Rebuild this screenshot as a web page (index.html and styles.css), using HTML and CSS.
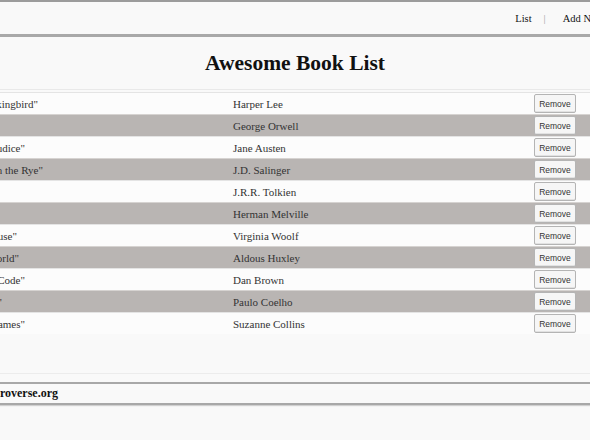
FILE: index.html
```html
<!DOCTYPE html>
<html lang="en">
<head>
<meta charset="utf-8">
<title>Awesome Book List</title>
<link rel="stylesheet" href="styles.css">
</head>
<body>
<div class="page">
  <header class="site-header">
    <nav class="nav">
      <a href="#" class="nav-link">List</a>
      <span class="sep">|</span>
      <a href="#" class="nav-link">Add New</a>
      <span class="sep">|</span>
      <a href="#" class="nav-link">Contact</a>
    </nav>
  </header>
  <main class="content">
    <h1 class="heading">Awesome Book List</h1>
    <div class="books">
      <div class="row"><div class="title-cell"><span class="title" style="--end:123px">"To Kill a Mockingbird"</span></div><div class="author">Harper Lee</div><button class="remove">Remove</button></div>
      <div class="row"><div class="title-cell"><span class="title" style="--end:60px">"1984"</span></div><div class="author">George Orwell</div><button class="remove">Remove</button></div>
      <div class="row"><div class="title-cell"><span class="title" style="--end:110px">"Pride and Prejudice"</span></div><div class="author">Jane Austen</div><button class="remove">Remove</button></div>
      <div class="row"><div class="title-cell"><span class="title" style="--end:128px">"The Catcher in the Rye"</span></div><div class="author">J.D. Salinger</div><button class="remove">Remove</button></div>
      <div class="row"><div class="title-cell"><span class="title" style="--end:60px">"The Hobbit"</span></div><div class="author">J.R.R. Tolkien</div><button class="remove">Remove</button></div>
      <div class="row"><div class="title-cell"><span class="title" style="--end:60px">"Moby Dick"</span></div><div class="author">Herman Melville</div><button class="remove">Remove</button></div>
      <div class="row"><div class="title-cell"><span class="title" style="--end:102px">"To the Lighthouse"</span></div><div class="author">Virginia Woolf</div><button class="remove">Remove</button></div>
      <div class="row"><div class="title-cell"><span class="title" style="--end:104px">"Brave New World"</span></div><div class="author">Aldous Huxley</div><button class="remove">Remove</button></div>
      <div class="row"><div class="title-cell"><span class="title" style="--end:110px">"The Da Vinci Code"</span></div><div class="author">Dan Brown</div><button class="remove">Remove</button></div>
      <div class="row"><div class="title-cell"><span class="title" style="--end:87px">"The Alchemist"</span></div><div class="author">Paulo Coelho</div><button class="remove">Remove</button></div>
      <div class="row"><div class="title-cell"><span class="title" style="--end:110px">"The Hunger Games"</span></div><div class="author">Suzanne Collins</div><button class="remove">Remove</button></div>
    </div>
  </main>
  <footer class="site-footer">
    <p class="copy">Copyright &copy; microverse.org</p>
  </footer>
</div>
</body>
</html>
```

FILE: styles.css
```css
html, body {
  margin: 0;
  padding: 0;
}

body {
  background: #f9f9f9;
  font-family: "Liberation Serif", "Times New Roman", serif;
  color: #222;
  overflow: hidden;
  height: 440px;
}

.page {
  width: 760px;
  margin-left: -85px;
}

.site-header {
  border-top: 2px solid #9c9c9c;
  border-bottom: 3px solid #a9a9a9;
  height: 32px;
  display: flex;
  align-items: center;
  justify-content: flex-end;
  padding-right: 8px;
}

.nav {
  display: flex;
  align-items: center;
  gap: 12px;
  font-size: 10.5px;
  white-space: nowrap;
  padding-top: 1px;
}

.nav-link {
  color: #111;
  text-decoration: none;
}

.sep {
  color: #999;
  margin-right: 5px;
}

.content {
  border-bottom: 1px solid #ececec;
  padding-bottom: 39px;
}

.heading {
  margin: 0;
  height: 52px;
  display: flex;
  align-items: center;
  justify-content: center;
  font-size: 21.5px;
  font-weight: bold;
  color: #111;
}

.books {
  border-top: 1px solid #e9e9e9;
  padding-top: 2px;
}

.row {
  display: grid;
  grid-template-columns: 318px 1fr auto;
  align-items: center;
  height: 22px;
  padding-right: 99px;
  background: #fcfcfc;
  font-size: 11px;
  color: #333;
  border-top: 1px solid #e4e4e4;
  box-sizing: border-box;
}

.row:nth-child(even) {
  background: #b9b5b3;
  border-top-color: #d6d3d1;
}

.title-cell {
  white-space: nowrap;
}

.title {
  display: flex;
  justify-content: flex-end;
  width: var(--end);
}

.author {
  white-space: nowrap;
}

.remove {
  font-family: "Liberation Sans", Arial, sans-serif;
  font-size: 8.5px;
  color: #333;
  background: #f6f6f6;
  border: 1px solid #b4b4b4;
  border-radius: 2px;
  height: 19px;
  width: 42px;
  padding: 0;
  box-shadow: inset 0 -1px 0 #e2e2e2;
}

.site-footer {
  margin-top: 8px;
  border-top: 2px solid #a8a8a8;
  border-bottom: 2px solid #a8a8a8;
  box-shadow: 0 1px 1px #d0d0d0;
  height: 19px;
  display: flex;
  align-items: center;
}

.copy {
  margin: 0;
  font-size: 12px;
  font-weight: bold;
  color: #111;
  white-space: nowrap;
  display: flex;
  justify-content: flex-end;
  width: 143px;
}
```
